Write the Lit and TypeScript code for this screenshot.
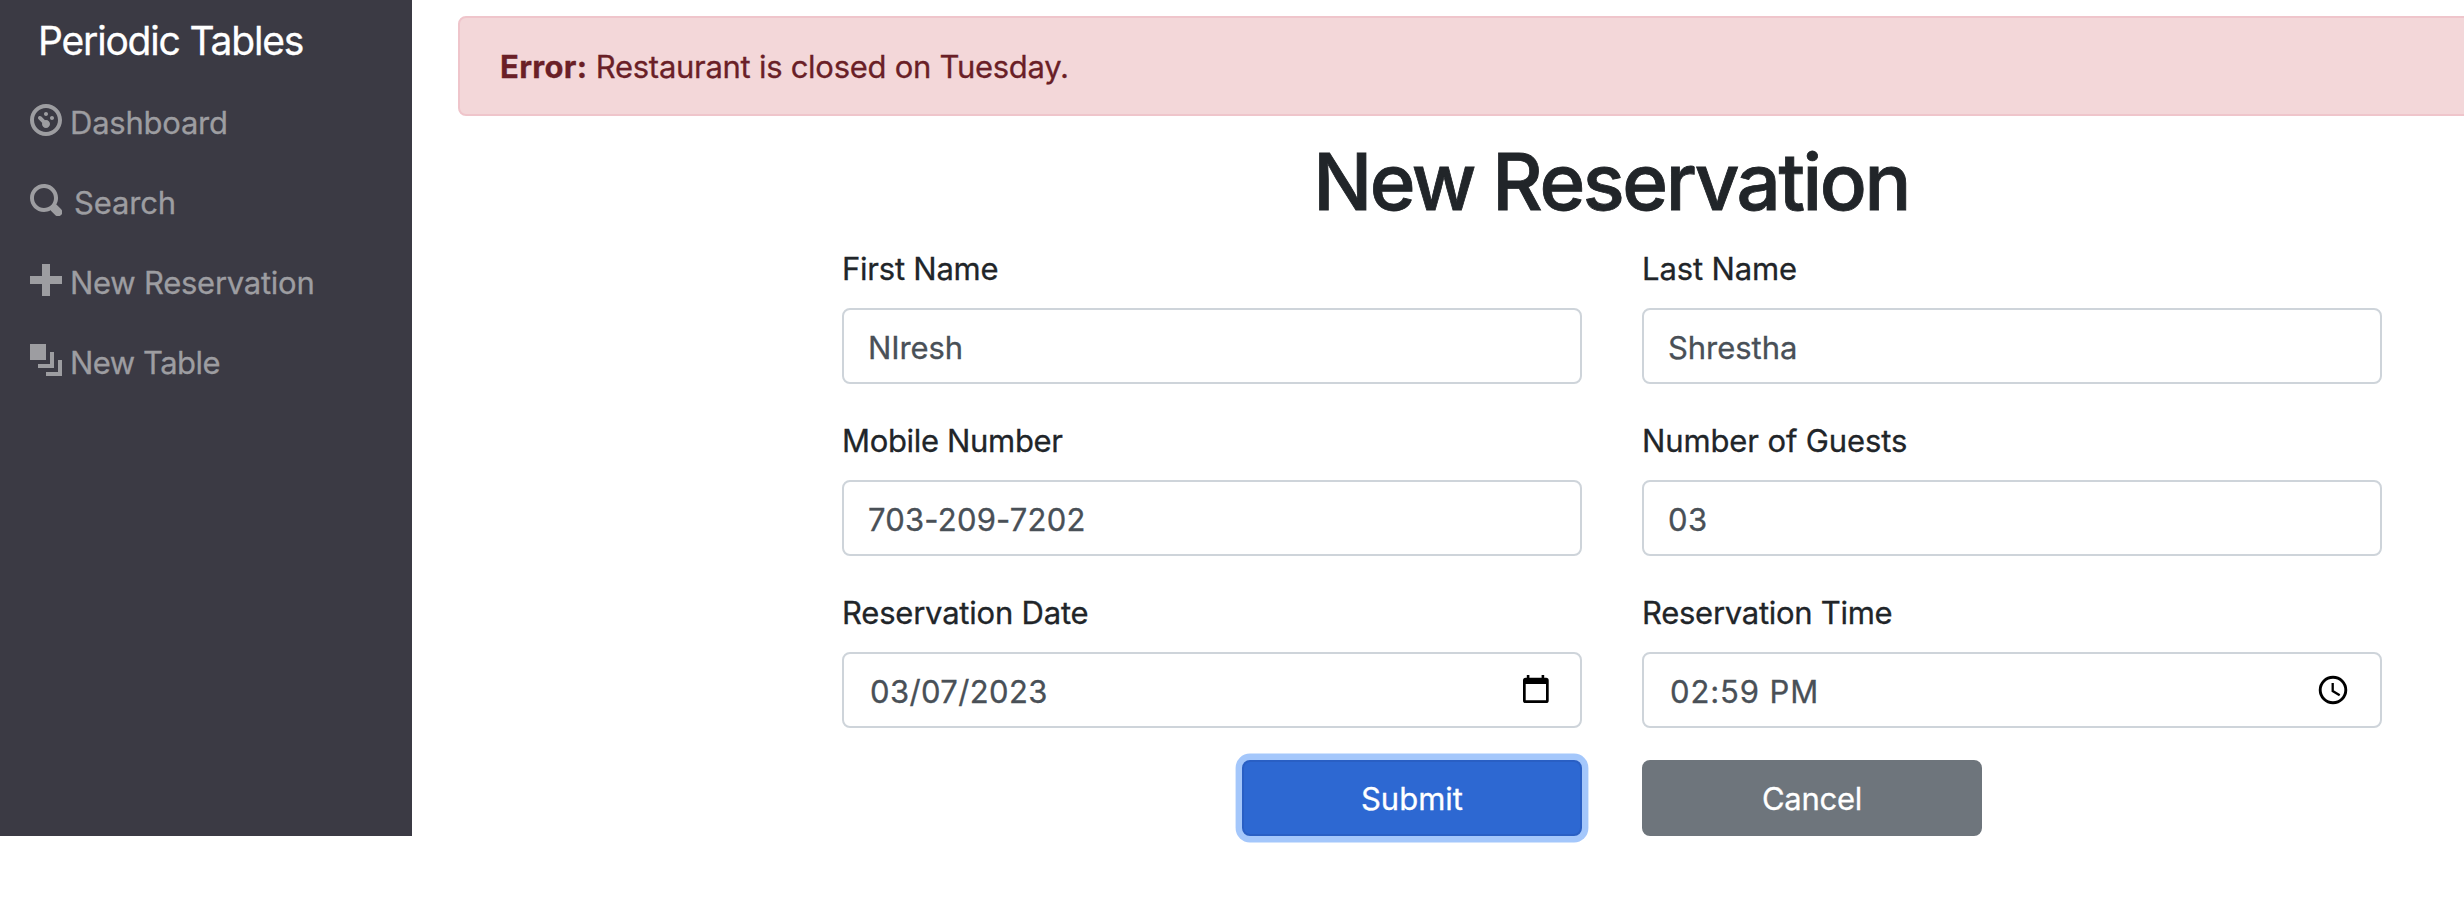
import { LitElement, html, css, svg, nothing } from "lit";
import { customElement } from "lit/decorators.js";

const icons = {
  dashboard: "M4 0c-2.2 0-4 1.8-4 4s1.8 4 4 4 4-1.8 4-4-1.8-4-4-4zm0 1c1.66 0 3 1.34 3 3s-1.34 3-3 3-3-1.34-3-3 1.34-3 3-3zm0 1c-.28 0-.5.22-.5.5s.22.5.5.5.5-.22.5-.5-.22-.5-.5-.5zm-1.66 1a.5.5 0 0 0-.19.84l.91.91c-.02.08-.06.16-.06.25 0 .55.45 1 1 1s1-.45 1-1-.45-1-1-1c-.09 0-.17.04-.25.06l-.91-.91a.5.5 0 0 0-.44-.16.5.5 0 0 0-.06 0zm3.16 0c-.28 0-.5.22-.5.5s.22.5.5.5.5-.22.5-.5-.22-.5-.5-.5z",
  search: "M3.5 0c-1.93 0-3.5 1.57-3.5 3.5s1.57 3.5 3.5 3.5c.59 0 1.17-.14 1.66-.41a1 1 0 0 0 .13.13l1 1a1.02 1.02 0 1 0 1.44-1.44l-1-1a1 1 0 0 0-.16-.13c.27-.49.44-1.06.44-1.66 0-1.93-1.55-3.5-3.5-3.5zm0 1c1.39 0 2.5 1.11 2.5 2.5 0 .66-.24 1.27-.66 1.72-.01.01-.02.02-.03.03a1 1 0 0 0-.13.13c-.44.4-1.04.63-1.69.63-1.39 0-2.5-1.11-2.5-2.5s1.11-2.5 2.5-2.5z",
  plus: "M3 0v3h-3v2h3v3h2v-3h3v-2h-3v-3h-2z",
  layers: "M0 0v4h4v-4h-4zm5 2v3h-3v1h4v-4h-1zm2 2v3h-3v1h4v-4h-1z",
};

const links = [
  { text: "Dashboard", icon: icons.dashboard, tracking: -0.24 },
  { text: "Search", icon: icons.search, tracking: -0.15, wide: true },
  { text: "New Reservation", icon: icons.plus, tracking: -0.26 },
  { text: "New Table", icon: icons.layers, tracking: -0.51 },
];

const calendar = svg`<svg class="picker" width="28" height="32" viewBox="0 1 28 32">
  <path fill="#000" fill-rule="evenodd" d="M3.8 2h2.6v2.8h12.2V2h2.6v2.8h1.9a2.6 2.6 0 0 1 2.6 2.6v20a2.6 2.6 0 0 1-2.6 2.6H2.6A2.6 2.6 0 0 1 0 27.4v-20a2.6 2.6 0 0 1 2.6-2.6h1.2zM2.7 11v16.2h20.300V11z"/></svg>`;
const clock = svg`<svg class="picker" width="30" height="32" viewBox="0 1 30 32">
  <circle cx="15" cy="17" r="12.8" fill="none" stroke="#000" stroke-width="2.9"/>
  <path d="M14.7 10v8l7 4.2" fill="none" stroke="#000" stroke-width="2.3"/></svg>`;

const fields = [
  { label: "First Name", value: "NIresh", lt: -0.24, vt: -0.1 },
  { label: "Last Name", value: "Shrestha", lt: -0.13, vt: -0.05 },
  { label: "Mobile Number", value: "703-209-7202", lt: -0.33, vt: 0.2 },
  { label: "Number of Guests", value: "03", lt: -0.12, vt: 0.4 },
  { label: "Reservation Date", value: "03/07/2023", lt: -0.21, vt: 0.38, picker: calendar },
  { label: "Reservation Time", value: "02:59 PM", lt: -0.28, vt: 0.9, picker: clock },
];

@customElement("app-root")
export class AppRoot extends LitElement {
  static styles = css`
    :host { display: flex; align-items: flex-start; height: 924px; overflow: hidden; background: #fff;
      color: #212529; font: 400 31px/48px Inter, "Liberation Sans", sans-serif; -webkit-text-stroke-width: .3px; }
    * { box-sizing: border-box; }
    .sidebar { flex: none; width: 412px; height: 836px; background: #3b3a44; padding-top: 11px; }
    .brand { padding-left: 38px; height: 72px; color: #fff; font-size: 39px; line-height: 60px; letter-spacing: -1.19px; white-space: nowrap; }
    .link { display: flex; align-items: center; gap: 8px; height: 80px; padding-left: 30px; color: #9d9da1; }
    .link svg { display: block; margin-bottom: 6px; }
    .link.wide { gap: 12px; }
    .main { flex: 1; min-width: 0; padding: 16px 0 0 46px; }
    .alert { margin-right: -20px; height: 100px; padding: 25px 40px 0; border: 2px solid #efc5cb; border-radius: 8px;
      background: #f3d7d9; color: #6a1f27; white-space: nowrap; letter-spacing: -.28px; }
    .alert b { letter-spacing: .3px; }
    .form { width: 1540px; margin-left: 384px; }
    h1 { margin: 18px 0 14px -2px; font-size: 78px; line-height: 96px; font-weight: 500; letter-spacing: -2.44px; text-align: center; -webkit-text-stroke-width: .8px; }
    .grid { display: grid; grid-template-columns: 740px 740px; gap: 32px 60px; }
    .field { display: flex; flex-direction: column; gap: 14px; }
    label { line-height: 50px; }
    .box { display: flex; align-items: center; height: 76px; border: 2px solid #ced4da; border-radius: 8px; padding: 0 32px 0 24px; color: #495057; }
    .date { padding-right: 29px; }
    input { flex: 1; min-width: 0; height: 50px; padding: 2px 0 0; border: 0; outline: 0; background: none; color: inherit; font: inherit; letter-spacing: inherit; }
    .date input, .time input { padding-left: 2px; }
    button { width: 340px; height: 76px; padding: 12px 0 10px; border: 2px solid; border-radius: 8px; color: #fff; font: inherit; }
    .submit { justify-self: end; background: #2d68d2; border-color: #295fc4; box-shadow: 0 0 0 6.4px #a4c7fb; }
    .cancel { background: #6e757c; border-color: #6e757c; letter-spacing: -.28px; }
  `;

  render() {
    return html`
      <nav class="sidebar">
        <div class="brand">Periodic Tables</div>
        ${links.map((l) => html`<div class="link ${l.wide ? "wide" : ""}">
          <svg width="32" height="32" viewBox="0 0 8 8" fill="currentColor"><path d=${l.icon}></path></svg>
          <span style="letter-spacing:${l.tracking}px">${l.text}</span></div>`)}
      </nav>
      <main class="main">
        <div class="alert"><b>Error:</b> Restaurant is closed on Tuesday.</div>
        <div class="form">
          <h1>New Reservation</h1>
          <div class="grid">
            ${fields.map((f) => html`<div class="field">
              <label style="letter-spacing:${f.lt}px">${f.label}</label>
              <div class="box ${f.picker === calendar ? "date" : f.picker ? "time" : ""}" style="letter-spacing:${f.vt}px">
                <input .value=${f.value}>${f.picker ?? nothing}</div></div>`)}
            <button class="submit">Submit</button>
            <button class="cancel">Cancel</button>
          </div>
        </div>
      </main>`;
  }
}
